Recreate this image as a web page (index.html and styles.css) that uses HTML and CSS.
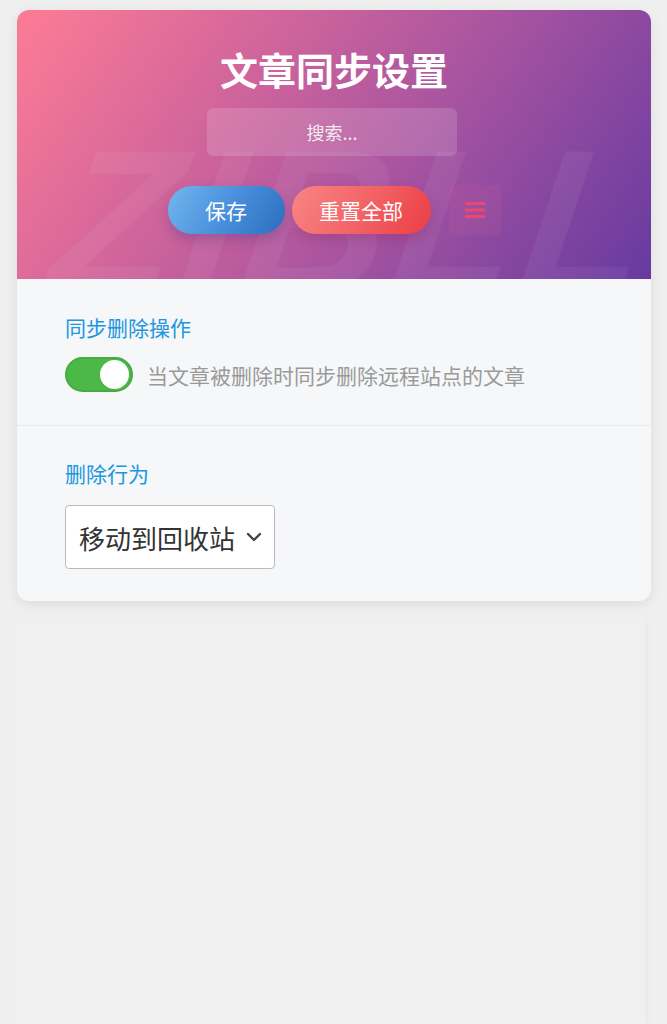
FILE: index.html
```html
<!DOCTYPE html>
<html lang="zh-CN">
<head>
<meta charset="utf-8">
<title>文章同步设置</title>
<link rel="stylesheet" href="styles.css">
</head>
<body>
<div class="page">
  <div class="card">
    <div class="header">
      <div class="watermark">ZIBLL</div>
      <h1 class="title">文章同步设置</h1>
      <div class="search">搜索...</div>
      <div class="actions">
        <button class="btn btn-save">保存</button>
        <button class="btn btn-reset">重置全部</button>
        <button class="menu-btn" aria-label="菜单">
          <svg width="20" height="17" viewBox="0 0 20 17"><rect x="0" y="0" width="20" height="3" fill="#f0466e"/><rect x="0" y="6.5" width="20" height="3" fill="#f0466e"/><rect x="0" y="13" width="20" height="3" fill="#f0466e"/></svg>
        </button>
      </div>
    </div>
    <div class="section">
      <div class="label">同步删除操作</div>
      <div class="toggle-row">
        <span class="toggle"><span class="knob"></span></span>
        <span class="desc">当文章被删除时同步删除远程站点的文章</span>
      </div>
    </div>
    <div class="section section-last">
      <div class="label">删除行为</div>
      <div class="select">
        <span>移动到回收站</span>
        <svg width="16" height="10" viewBox="0 0 16 10"><path d="M2 2 L8 8 L14 2" fill="none" stroke="#444" stroke-width="2.4" stroke-linecap="round" stroke-linejoin="round"/></svg>
      </div>
    </div>
  </div>
  <div class="ghost"></div>
</div>
</body>
</html>
```

FILE: styles.css
```css
* { box-sizing: border-box; }
html, body { margin: 0; padding: 0; }
body {
  background: #efefef;
  font-family: "Noto Sans CJK SC", "Noto Sans", sans-serif;
  height: 1024px;
  overflow: hidden;
}
.page {
  padding: 10px 16px 0 17px;
  display: flex;
  flex-direction: column;
  gap: 16px;
  height: 1024px;
}
.card {
  width: 634px;
  border-radius: 12px;
  overflow: hidden;
  background: #f5f7f9;
  box-shadow: 0 3px 12px rgba(0,0,0,0.08);
  flex: none;
}
.header {
  position: relative;
  height: 269px;
  background: linear-gradient(125deg, #fd7c95 0%, #d8689a 28%, #a854a0 60%, #673aa0 100%);
  display: flex;
  flex-direction: column;
  align-items: center;
  padding-top: 35px;
  overflow: hidden;
}
.watermark {
  position: absolute;
  left: 40px;
  top: 110px;
  font-family: "Liberation Sans", sans-serif;
  font-weight: 700;
  font-style: italic;
  font-size: 200px;
  letter-spacing: 6px;
  color: rgba(255,255,255,0.055);
  line-height: 1;
  transform: skewX(-8deg);
  pointer-events: none;
}
.title {
  position: relative;
  margin: 0;
  font-size: 38px;
  font-weight: 700;
  color: #fff;
  line-height: 48px;
}
.search {
  position: relative;
  margin-top: 15px;
  margin-right: 4px;
  width: 250px;
  height: 48px;
  border-radius: 6px;
  background: rgba(255,255,255,0.15);
  color: rgba(255,255,255,0.85);
  font-size: 18px;
  display: flex;
  align-items: center;
  justify-content: center;
}
.actions {
  position: relative;
  margin-top: 29px;
  display: flex;
  align-items: center;
}
.btn {
  border: none;
  height: 48px;
  border-radius: 24px;
  color: #fff;
  font-family: inherit;
  font-size: 21px;
  line-height: 1;
  padding: 0;
  display: flex;
  align-items: center;
  justify-content: center;
  white-space: nowrap;
}
.btn-save {
  width: 117px;
  background: linear-gradient(120deg, #72b6ee 0%, #4a90dc 50%, #2a6fbe 100%);
  box-shadow: 0 6px 12px rgba(60,40,120,0.25);
}
.btn-reset {
  width: 139px;
  margin-left: 7px;
  background: linear-gradient(120deg, #f98585 0%, #f36466 50%, #ea3d44 100%);
  box-shadow: 0 6px 12px rgba(140,30,80,0.25);
}
.menu-btn {
  margin-left: 18px;
  width: 52px;
  height: 50px;
  border: none;
  border-radius: 4px;
  background: rgba(255,110,150,0.08);
  display: flex;
  align-items: center;
  justify-content: center;
  padding: 0;
}
.section {
  padding: 33px 48px 33px 48px;
  border-bottom: 1px solid #e7e9ec;
}
.section-last {
  border-bottom: none;
  padding-top: 32px;
  padding-bottom: 32px;
}
.label {
  color: #2196e0;
  font-size: 21px;
  line-height: 30px;
}
.toggle-row {
  margin-top: 15px;
  display: flex;
  align-items: center;
  gap: 14px;
}
.toggle {
  width: 68px;
  height: 35px;
  border-radius: 18px;
  background: #4cb848;
  border: 2px solid #45ac42;
  display: flex;
  align-items: center;
  justify-content: flex-end;
  padding-right: 2px;
  flex: none;
}
.knob {
  width: 29px;
  height: 29px;
  border-radius: 50%;
  background: #fff;
}
.desc {
  color: #9a9a9a;
  font-size: 21px;
  line-height: 30px;
}
.select {
  margin-top: 17px;
  width: 210px;
  height: 64px;
  background: #fff;
  border: 1px solid #b9b9b9;
  border-radius: 4px;
  display: flex;
  align-items: center;
  justify-content: space-between;
  padding: 0 12px 0 13px;
  font-size: 26px;
  color: #333;
}
.ghost {
  flex: 1;
  width: 628px;
  background: #f0f0f0;
  box-shadow: 3px 0 6px rgba(0,0,0,0.025);
}
```
